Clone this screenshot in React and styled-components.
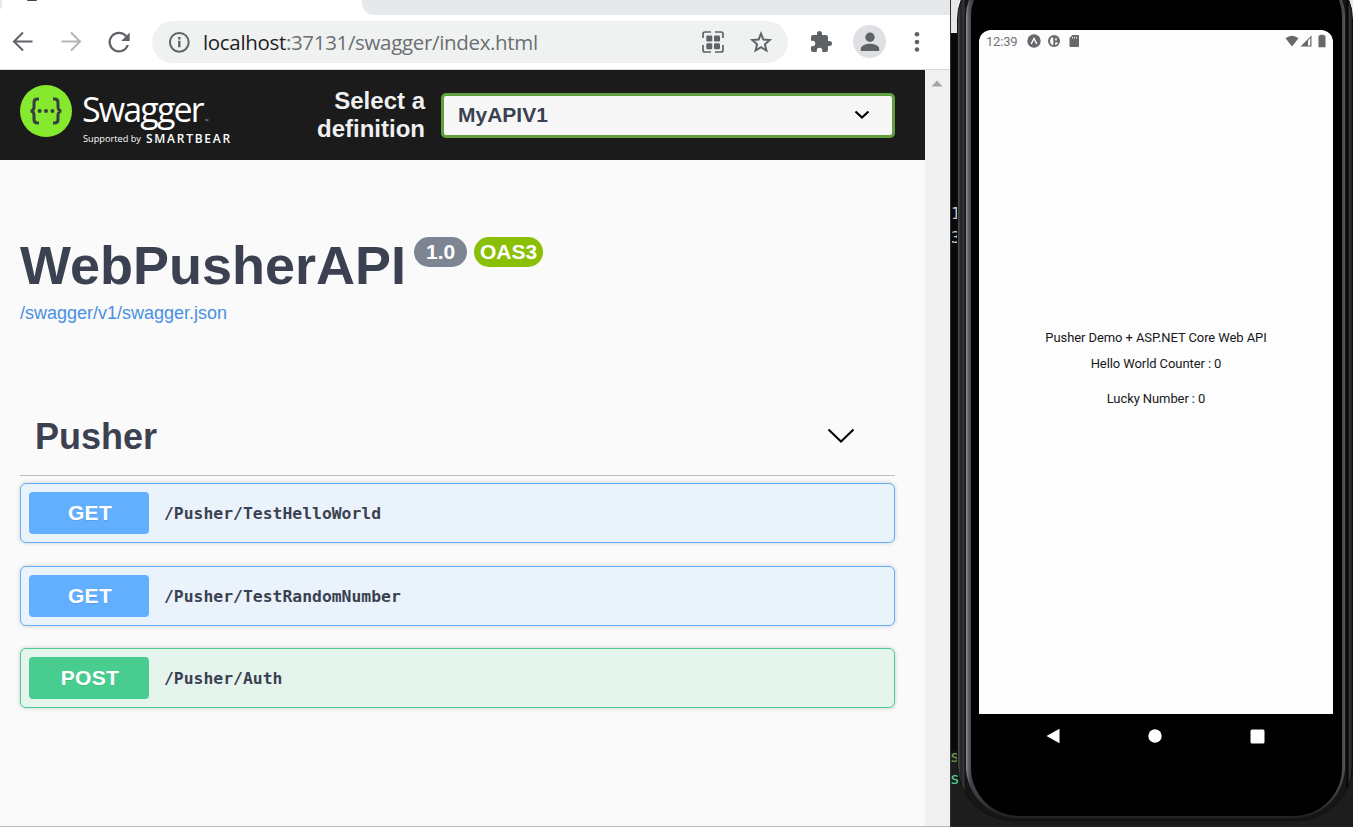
import React from 'react';
import styled, { createGlobalStyle } from 'styled-components';

const Global = createGlobalStyle`
  * { box-sizing: border-box; }
  body { margin: 0; background: #1d1d1d; overflow: hidden; }
  svg { display: block; flex: none; }
`;

const Desktop = styled.div`
  display: grid;
  grid-template-columns: 950px 403px;
  width: 1353px;
  height: 827px;
  overflow: hidden;
  font-family: 'Liberation Sans', Arial, sans-serif;
  color: #3b4151;
`;

const Browser = styled.section`
  display: flex;
  flex-direction: column;
  height: 827px;
  overflow: hidden;
  background: #fff;
  border-bottom: 1px solid #b4b6ba;
`;

const TabStrip = styled.div`
  display: flex;
  justify-content: space-between;
  height: 15px;
  flex: none;
`;
const PreviousTab = styled.div`
  width: 2px;
  height: 9px;
  background: #e6eaed;
  border-bottom-right-radius: 2px;
`;
const Favicon = styled.div`
  width: 10px;
  height: 1px;
  margin: 0 auto 0 25px;
  background: #3b4151;
  border-radius: 0 0 5px 5px;
`;
const EmptyTabs = styled.div`
  width: 588px;
  height: 15px;
  background: #e5e9ec;
  border-bottom-left-radius: 12px;
`;

const Toolbar = styled.div`
  display: flex;
  align-items: center;
  height: 55px;
  flex: none;
  padding: 0 30px 1px 11px;
  border-bottom: 1px solid #d9dadd;
`;
const NavButtons = styled.div`
  display: flex;
  gap: 24px;
  width: 141px;
`;
const AddressBar = styled.div`
  display: flex;
  align-items: center;
  width: 636px;
  height: 42px;
  padding: 0 15px 0 15px;
  border-radius: 21px;
  background: #f0f2f1;
`;
const Url = styled.span`
  flex: 1;
  margin-left: 12px;
  font: 20.5px/28px 'Open Sans', 'Noto Sans', sans-serif;
  letter-spacing: ${(p) => p.$tracking};
  white-space: nowrap;
  color: #6b6e72;
`;
const Host = styled.span`
  color: #1f2124;
`;
const Actions = styled.div`
  display: flex;
  align-items: center;
  margin-left: auto;
`;
const BarIcons = styled.div`
  display: flex;
  gap: 24px;
`;
const Avatar = styled.div`
  display: flex;
  align-items: center;
  justify-content: center;
  width: 33px;
  height: 33px;
  margin: 0 28px 0 20px;
  border-radius: 50%;
  background: #dee0e4;
`;

const Viewport = styled.div`
  display: flex;
  flex: 1;
  min-height: 0;
`;
const Page = styled.main`
  width: 925px;
  background: #fafafa;
`;
const Scrollbar = styled.div`
  width: 25px;
  padding: 10px 0 0 6px;
  background: #f0f0f0;
`;

const Topbar = styled.header`
  display: flex;
  align-items: center;
  height: 90px;
  padding: 0 30px 0 20px;
  background: #1b1b1b;
`;
const Logo = styled.div`
  display: flex;
  align-items: flex-start;
  gap: 10px;
  width: 270px;
  height: 60px;
  color: #fff;
`;
const LogoText = styled.div`
  display: flex;
  flex-direction: column;
  font-family: 'Open Sans', sans-serif;
  white-space: nowrap;
`;
const Wordmark = styled.div`
  display: flex;
  align-items: flex-end;
  height: 44px;
  padding-bottom: 1px;
  font-size: 34px;
  line-height: 38px;
  letter-spacing: -1.85px;
`;
const Trademark = styled.span`
  margin-left: 2px;
  font-size: 5px;
  line-height: 14px;
  letter-spacing: 0;
  color: #bbb;
`;
const Tagline = styled.div`
  display: flex;
  align-items: center;
  gap: 5px;
  height: 18px;
  margin-left: 1px;
  font-size: 9.2px;
  letter-spacing: 0;
`;
const Company = styled.span`
  font-size: 12px;
  font-weight: 600;
  letter-spacing: 1.75px;
`;
const DefinitionLabel = styled.label`
  width: 135px;
  margin-right: 16px;
  font-size: 24px;
  font-weight: 700;
  line-height: 28px;
  text-align: right;
  color: #f0f0f0;
`;
const Select = styled.div`
  display: flex;
  align-items: center;
  justify-content: space-between;
  width: 454px;
  height: 45px;
  padding: 0 22px 2px 14px;
  margin-top: 1px;
  border: 3px solid #62a03f;
  border-radius: 5px;
  background: #f7f7f7;
  font-size: 21px;
  font-weight: 700;
`;

const Info = styled.section`
  height: 237px;
  padding: 75px 20px 0;
`;
const TitleRow = styled.div`
  display: flex;
  align-items: flex-start;
  height: 64px;
`;
const Title = styled.h1`
  margin: -1px 8px 0 0;
  font-size: 54px;
  line-height: 62px;
`;
const Badge = styled.span`
  display: flex;
  justify-content: center;
  width: ${(p) => p.$width}px;
  height: 30px;
  margin: 2px 7px 0 0;
  border-radius: 15px;
  background: ${(p) => p.$color};
  color: #fff;
  font-size: 21px;
  font-weight: 700;
  line-height: 30px;
`;
const SpecLink = styled.a`
  display: block;
  margin-top: 3px;
  font-size: 18px;
  line-height: 22px;
  color: #4990e2;
`;

const Operations = styled.section`
  width: 875px;
  margin-left: 20px;
`;
const TagHeader = styled.div`
  display: flex;
  align-items: center;
  justify-content: space-between;
  height: 79px;
  padding: 0 40px 0 15px;
  margin-bottom: 7px;
  border-bottom: 1.5px solid #bfc0c6;
`;
const TagName = styled.h2`
  margin: 2px 0 0;
  font-size: 36px;
  line-height: 42px;
`;
const tones = {
  GET: { main: '#61affe', soft: '#eaf2fb' },
  POST: { main: '#49cc90', soft: '#e6f4ee' },
};
const Operation = styled.div`
  display: flex;
  align-items: center;
  gap: 15px;
  height: 60px;
  margin-bottom: 22.5px;
  padding: 0 8px;
  border: 1px solid ${(p) => tones[p.$method].main};
  border-radius: 6px;
  background: ${(p) => tones[p.$method].soft};
  box-shadow: 0 0 4px rgba(0, 0, 0, 0.19);
`;
const Method = styled.span`
  width: 120px;
  height: 42px;
  padding-left: 2px;
  border-radius: 4px;
  background: ${(p) => tones[p.$method].main};
  color: #fff;
  font-size: 21px;
  font-weight: 700;
  line-height: 42px;
  letter-spacing: 0.3px;
  text-align: center;
  text-shadow: 0 1px 0 rgba(0, 0, 0, 0.1);
`;
const Path = styled.code`
  padding-top: 2px;
  font: 700 16.4px/24px 'DejaVu Sans Mono', monospace;
`;

const Backdrop = styled.section`
  position: relative;
  display: flex;
  height: 827px;
  padding-left: 6px;
  overflow: hidden;
  background: linear-gradient(#e8e8e8 0 33px, #090909 33px 750px, #1d1d1d 754px);
  border-left: 1px solid #303033;
`;
const Terminal = styled.div`
  position: absolute;
  top: ${(p) => p.$top}px;
  left: ${(p) => p.$left}px;
  color: ${(p) => p.$color};
  font: 16px/20px 'DejaVu Sans Mono', monospace;
`;
const Phone = styled.div`
  position: relative;
  flex: none;
  width: 396px;
  height: 852px;
  margin-top: -31px;
  padding: 0 7px 2px 8px;
  border: 1px solid #101010;
  border-radius: 50px 50px 56px 56px;
  background: linear-gradient(90deg, #48494b 0 1px, #262728 2px 4px, #343433 5px 6px, #161616 7px 388px, #050505 389px 390px, #36373a 391px, #202124 394px);
`;
const Rim = styled.div`
  height: 848px;
  padding: 2px 3px 2px 5px;
  border-radius: 46px 46px 52px 52px;
  background: linear-gradient(90deg, #92969a 0, #62666c 2px, #40444a 5px, #252527 30px 345px, #48494d 377px, #5b5c60 379px);
`;
const Bezel = styled.div`
  display: flex;
  flex-direction: column;
  height: 844px;
  padding: 58px 10px 0 8px;
  border-radius: 44px 44px 48px 48px;
  background: #000;
`;
const Screen = styled.div`
  width: 354px;
  height: 684px;
  flex: none;
  border-radius: 12px 12px 0 0;
  background: #fdfdfd;
  font-family: Roboto, sans-serif;
`;
const StatusBar = styled.div`
  display: flex;
  align-items: center;
  height: 22px;
  padding: 0 6px 0 7px;
  font-size: 13px;
  letter-spacing: -0.2px;
  color: #727478;
`;
const StatusIcons = styled.div`
  display: flex;
  align-items: center;
  gap: ${(p) => p.$gap}px;
  margin-left: ${(p) => p.$left};
`;
const Demo = styled.div`
  display: flex;
  flex-direction: column;
  align-items: center;
  padding-top: 277px;
  color: #17181b;
`;
const DemoLine = styled.p`
  margin: 0 0 ${(p) => p.$after || 0}px;
  font-size: 13px;
  line-height: 17px;
  letter-spacing: -0.09px;
`;
const NavBar = styled.div`
  display: flex;
  align-items: center;
  justify-content: space-between;
  width: 219px;
  height: 44px;
  margin-left: 67px;
`;

const stroke = { fill: 'none', stroke: '#5f6368', strokeWidth: 2 };

const Arrow = ({ forward }) => (
  <svg width="24" height="24" viewBox="0 0 24 24" {...stroke} stroke={forward ? '#b4b5b8' : '#5f6368'}
    transform={forward ? 'scale(-1 1)' : undefined}>
    <path d="M21.5 11.500H3M12 2.500 3 11.500l9 9" />
  </svg>
);
const Reload = () => (
  <svg width="24" height="24" viewBox="0 0 24 24">
    <path d="M19.2 6.3A9.3 9.3 0 1 0 20.8 15" {...stroke} strokeWidth="2.2" />
    <path d="M22.7 2.4v8.5h-8.5Z" fill="#5f6368" />
  </svg>
);
const InfoIcon = () => (
  <svg width="24" height="24" viewBox="0 0 24 24" {...stroke}>
    <circle cx="12.300" cy="12.300" r="9.4" />
    <path d="M12.300 10.800v6.500M12.300 7.100v2.3" strokeWidth="2.4" />
  </svg>
);
const QrIcon = () => (
  <svg width="24" height="24" viewBox="0 0 24 24">
    <path d="M2 8V4q0-2 2-2h6M14 2h6q2 0 2 2v4M22 15v5q0 2-2 2h-6M10 22H4q-2 0-2-2v-5" {...stroke} strokeWidth="1.7" />
    <g fill="#5f6368">
      <rect x="5.3" y="5.5" width="6" height="6" rx="1.3" />
      <rect x="13" y="5.5" width="6" height="6" rx="1.3" />
      <rect x="5.3" y="13.2" width="6" height="6" rx="1.3" />
      <rect x="13" y="13.2" width="6" height="6" rx="1.3" />
    </g>
  </svg>
);
const Star = () => (
  <svg width="24" height="24" viewBox="0 0 24 24" {...stroke}>
    <path d="m12 3.7 2.4 5.9 6.3.5-4.8 4.2 1.5 6.2-5.4-3.3-5.4 3.3 1.5-6.2-4.8-4.2 6.3-.5Z" />
  </svg>
);
const Puzzle = () => (
  <svg width="24" height="24" viewBox="0 0 24 24" fill="#5f6368">
    <path d="M20.5 11H19V7a2 2 0 0 0-2-2h-4V3.500a2.500 2.500 0 0 0-5 0V5H4a2 2 0 0 0-2 2v3.800h1.500a2.700 2.700 0 0 1 0 5.400H2V20a2 2 0 0 0 2 2h3.800v-1.500a2.700 2.700 0 0 1 5.400 0V22H17a2 2 0 0 0 2-2v-4h1.500a2.500 2.500 0 0 0 0-5Z" />
  </svg>
);
const Person = () => (
  <svg width="24" height="24" viewBox="0 0 24 24" fill="#5f6368">
    <circle cx="12" cy="7.300" r="4.700" />
    <path d="M2.800 21v-2.300c0-3.200 5.500-5 9.200-5s9.200 1.800 9.200 5V21Z" />
  </svg>
);
const Dots = () => (
  <svg width="6" height="24" viewBox="0 0 6 24" fill="#5f6368">
    <circle cx="3" cy="4.300" r="2.300" /><circle cx="3" cy="12" r="2.300" /><circle cx="3" cy="19.500" r="2.300" />
  </svg>
);
const SwaggerMark = () => (
  <svg width="52" height="52" viewBox="0 0 52 52">
    <circle cx="26" cy="26" r="26" fill="#85ea2d" />
    <path d="M19 14h-1.500q-3.500 0-3.500 3.500v4q0 4.500-3.500 4.500 3.500 0 3.500 4.500v4q0 3.500 3.500 3.500H19M33 14h1.500q3.500 0 3.500 3.500v4q0 4.500 3.500 4.500-3.500 0-3.500 4.500v4q0 3.500-3.500 3.500H33" fill="none" stroke="#383e45" strokeWidth="3" />
    <g fill="#383e45"><circle cx="19.600" cy="26" r="2" /><circle cx="26" cy="26" r="2" /><circle cx="32.400" cy="26" r="2" /></g>
  </svg>
);

const operations = [
  { method: 'GET', path: '/Pusher/TestHelloWorld' },
  { method: 'GET', path: '/Pusher/TestRandomNumber' },
  { method: 'POST', path: '/Pusher/Auth' },
];

const BrowserWindow = () => (
  <Browser>
    <TabStrip><PreviousTab /><Favicon /><EmptyTabs /></TabStrip>
    <Toolbar>
      <NavButtons><Arrow /><Arrow forward /><Reload /></NavButtons>
      <AddressBar>
        <InfoIcon />
        <Url $tracking="-0.33px"><Host>localhost</Host>:37131/swagger/index.html</Url>
        <BarIcons><QrIcon /><Star /></BarIcons>
      </AddressBar>
      <Actions><Puzzle /><Avatar><Person /></Avatar></Actions>
      <Dots />
    </Toolbar>
    <Viewport>
      <Page>
        <Topbar>
          <Logo>
            <SwaggerMark />
            <LogoText>
              <Wordmark>Swagger<Trademark>™</Trademark></Wordmark>
              <Tagline>Supported by <Company>SMARTBEAR</Company></Tagline>
            </LogoText>
          </Logo>
          <DefinitionLabel>Select a definition</DefinitionLabel>
          <Select>
            MyAPIV1
            <svg width="16" height="10" viewBox="0 0 16 10"><path d="m1.500 1.500 6.500 6 6.500-6" fill="none" stroke="#000" strokeWidth="2.200" /></svg>
          </Select>
        </Topbar>
        <Info>
          <TitleRow>
            <Title>WebPusherAPI</Title>
            <Badge $width={53} $color="#7d8492">1.0</Badge>
            <Badge $width={69} $color="#89bf04">OAS3</Badge>
          </TitleRow>
          <SpecLink>/swagger/v1/swagger.json</SpecLink>
        </Info>
        <Operations>
          <TagHeader>
            <TagName>Pusher</TagName>
            <svg width="28" height="16" viewBox="0 0 28 16"><path d="m1.500 1.500 12.500 12 12.500-12" fill="none" stroke="#000" strokeWidth="2" /></svg>
          </TagHeader>
          {operations.map(({ method, path }) => (
            <Operation key={path} $method={method}>
              <Method $method={method}>{method}</Method>
              <Path>{path}</Path>
            </Operation>
          ))}
        </Operations>
      </Page>
      <Scrollbar>
        <svg width="12" height="7" viewBox="0 0 12 7"><path d="M.5 6.500 6 .5l5.500 6Z" fill="#a3a3a3" /></svg>
      </Scrollbar>
    </Viewport>
  </Browser>
);

const Emulator = () => (
  <Backdrop>
    <Terminal $top={204} $left={0} $color="#c8c8c8">1</Terminal>
    <Terminal $top={228} $left={0} $color="#c8c8c8">3</Terminal>
    <Terminal $top={747} $left={-1} $color="#6e9a48">s</Terminal>
    <Terminal $top={769} $left={-1} $color="#4fd08a">s</Terminal>
    <Phone>
      <Rim>
        <Bezel>
          <Screen>
            <StatusBar>
              12:39
              <StatusIcons $gap={7} $left="10px">
                <svg width="14" height="14" viewBox="0 0 14 14"><circle cx="7" cy="7" r="6.700" fill="#66686b" /><path d="m4.200 10 2.800-5.500L9.800 10" fill="none" stroke="#fff" strokeWidth="1.400" /></svg>
                <svg width="12" height="14" viewBox="0 0 12 14"><circle cx="6" cy="7" r="6" fill="#66686b" /><path d="M3.600 3.600h1.700v7.600q-3.200-.8-3.200-4.200 0-2.200 1.500-3.400Z" fill="#fff" /><path d="M7.200 4.200h1.600v2.200H7.200ZM7.200 8.600h3q-1 2.200-3 2.700Z" fill="#fff" /></svg>
                <svg width="14" height="14" viewBox="0 0 14 14"><path d="M5.500 1H11q1 0 1 1v10q0 1-1 1H3.500q-1 0-1-1V4Z" fill="#66686b" /><path d="M5.500 2.800v1.700M7.500 2.800v1.700M9.500 2.800v1.700" stroke="#fff" strokeWidth=".8" /></svg>
              </StatusIcons>
              <StatusIcons $gap={1} $left="auto">
                <svg width="14" height="12" viewBox="0 0 14 12"><path d="M.5 3.200q6.500-5 13 0L7 11.500Z" fill="#66686b" /></svg>
                <svg width="12" height="12" viewBox="0 0 12 12"><path d="M.5 11.500 11.500.5v11Z" fill="#66686b" /><path d="M8 5.500 10.300 3v7.500H8Z" fill="#fff" /></svg>
                <svg width="14" height="14" viewBox="0 0 14 14"><path d="M7.300 1.500V.7h3.400v.8h1.800v11.800H5.500V1.500Z" fill="#66686b" /></svg>
              </StatusIcons>
            </StatusBar>
            <Demo>
              <DemoLine $after={9}>Pusher Demo + ASP.NET Core Web API</DemoLine>
              <DemoLine $after={18}>Hello World Counter : 0</DemoLine>
              <DemoLine>Lucky Number : 0</DemoLine>
            </Demo>
          </Screen>
          <NavBar>
            <svg width="14" height="16" viewBox="0 0 14 16"><path d="M13.500.7v14.600L.5 8Z" fill="#fff" /></svg>
            <svg width="14" height="14" viewBox="0 0 14 14"><circle cx="7" cy="7" r="6.700" fill="#fff" /></svg>
            <svg width="15" height="15" viewBox="0 0 15 15"><rect x=".5" y=".5" width="14" height="14" rx="1.500" fill="#fff" /></svg>
          </NavBar>
        </Bezel>
      </Rim>
    </Phone>
  </Backdrop>
);

export default function App() {
  return (
    <Desktop>
      <Global />
      <BrowserWindow />
      <Emulator />
    </Desktop>
  );
}
